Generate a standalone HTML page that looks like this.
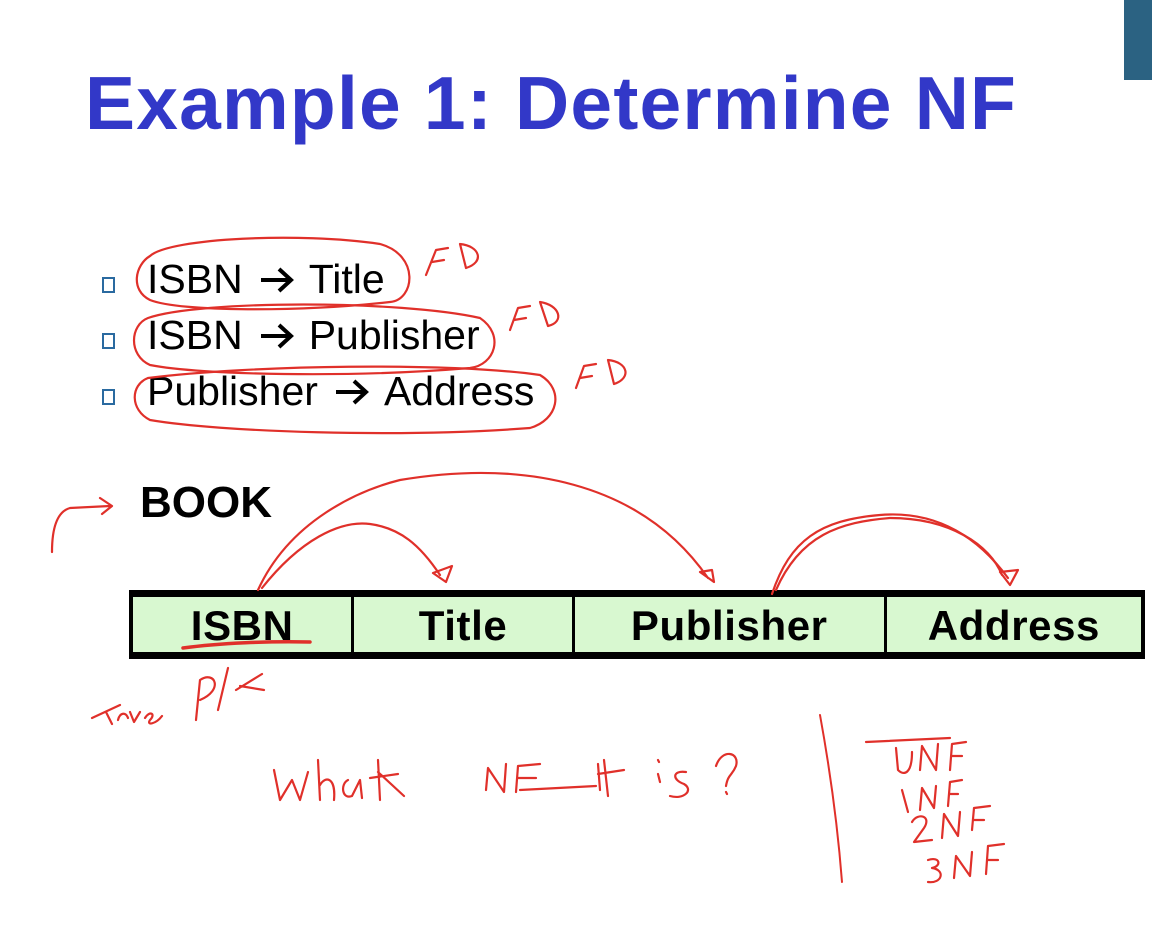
<!DOCTYPE html>
<html><head><meta charset="utf-8"><style>
html,body{margin:0;padding:0;background:#fff;}
body{width:1152px;height:930px;position:relative;overflow:hidden;font-family:"Liberation Sans",Arial,sans-serif;}
.t{position:absolute;white-space:nowrap;}
#title{left:85px;top:60px;font-size:75px;font-weight:bold;color:#3238c8;letter-spacing:1.2px;}
.b{position:absolute;width:9px;height:12px;border:2px solid #2a6aa0;left:102px;}
.li{font-size:41px;color:#000;left:147px;}
.ar{display:inline-block;width:36px;height:26px;margin:0 14px 0 16px;}
#book{left:140px;top:478px;font-size:44px;font-weight:bold;}
#tbl{position:absolute;left:129px;top:590px;width:1008px;height:55px;border:7px solid #000;border-left-width:4px;border-right-width:4px;background:#d8f8d0;display:flex;}
#tbl div{border-right:3px solid #000;font-weight:bold;font-size:42px;text-align:center;line-height:58px;letter-spacing:0.6px;}
</style></head><body>
<div style="position:absolute;left:1124px;top:0;width:28px;height:80px;background:#2b6282"></div>
<div class="t" id="title">Example 1: Determine NF</div>
<div class="b" style="top:277px"></div><div class="t li" style="top:256px">ISBN<svg class="ar" viewBox="0 0 36 26"><path d="M2 13H32M20 2L32 13L20 24" stroke="#000" stroke-width="4" fill="none"/></svg>Title</div>
<div class="b" style="top:333px"></div><div class="t li" style="top:312px">ISBN<svg class="ar" viewBox="0 0 36 26"><path d="M2 13H32M20 2L32 13L20 24" stroke="#000" stroke-width="4" fill="none"/></svg>Publisher</div>
<div class="b" style="top:389px"></div><div class="t li" style="top:368px">Publisher<svg class="ar" viewBox="0 0 36 26"><path d="M2 13H32M20 2L32 13L20 24" stroke="#000" stroke-width="4" fill="none"/></svg>Address</div>
<div class="t" id="book">BOOK</div>
<div id="tbl"><div style="width:219px">ISBN</div><div style="width:218px">Title</div><div style="width:310px">Publisher</div><div style="width:255px;border-right:none">Address</div></div>
<svg width="1152" height="930" style="position:absolute;left:0;top:0" fill="none" stroke="#e0302a" stroke-width="2.2" stroke-linecap="round" stroke-linejoin="round">
<path d="M150 256 C170 238 300 232 380 244 C420 255 415 300 390 302 C300 312 180 312 150 300 C130 290 135 265 150 256"/>
<path d="M148 318 C200 300 400 300 480 318 C505 335 495 365 470 368 C350 378 200 375 150 365 C128 355 130 325 148 318"/>
<path d="M148 378 C250 365 450 362 540 375 C565 390 558 420 530 428 C400 438 220 432 150 420 C130 410 130 385 148 378"/>
<path d="M426 275 L436 250 L448 248 M432 262 L444 260 M460 244 L466 268 M460 244 C480 246 485 262 466 268"/>
<path d="M510 330 L518 308 L530 306 M514 320 L526 318 M540 302 L548 326 M540 302 C560 305 565 322 548 326"/>
<path d="M576 388 L584 366 L596 364 M580 378 L592 376 M608 360 L614 384 M608 360 C628 362 632 378 614 384"/>
<path d="M52 552 C52 530 56 512 70 508 L110 506 M100 498 L112 506 L102 514"/>
<path d="M258 590 C290 520 360 490 400 480 C520 460 640 480 708 578 M700 572 L712 570 L714 582 Z"/>
<path d="M262 588 C300 540 340 520 370 524 C400 528 420 545 440 575 M433 573 L452 566 L446 582 Z"/>
<path d="M772 594 C790 540 820 520 880 515 C940 510 980 540 1008 578 M1000 572 L1018 570 L1010 585 Z"/>
<path d="M776 590 C800 535 840 522 890 518 C950 518 990 545 1002 575"/>
<path d="M183 648 C220 643 270 641 310 642" stroke-width="3.5"/>
<path d="M92 718 L120 705 M106 712 L112 724 M118 720 C120 712 126 712 128 718 M130 712 L134 722 L140 712 M145 718 C150 710 156 714 150 720 C146 726 156 724 162 716 M196 720 L200 680 C215 670 224 690 200 700 M218 710 L228 668 M236 690 L262 674 M240 686 L264 690"/>
<path d="M274 770 L280 800 L292 780 L300 800 L308 772 M318 760 L320 800 M320 785 C326 775 336 778 334 800 M348 780 C340 784 342 800 352 796 L360 780 L362 798 M378 760 L380 800 M370 778 L398 774 M378 772 L404 796"/>
<path d="M486 790 L488 768 L504 792 L506 764 M516 792 L518 766 L540 764 M518 778 L536 778 M520 790 L596 786 M598 764 L600 790 M604 760 L608 796 M598 774 L624 770"/>
<path d="M658 774 L660 782 M658 760 L659 762 M686 772 C672 770 672 780 684 784 C694 790 684 800 670 796 M716 766 C722 748 740 752 736 766 C732 776 728 774 726 786 M726 792 L727 794"/>
<path d="M820 715 C830 770 838 830 842 882" stroke-width="2"/>
<path d="M866 742 L950 738 M896 748 L898 770 C904 776 912 774 912 752 M920 770 L922 746 L936 770 L938 744 M950 770 L952 744 L966 742 M952 756 L962 756"/>
<path d="M902 790 L908 812 M920 810 L922 788 L934 808 L936 786 M948 806 L950 782 L962 780 M950 794 L958 794"/>
<path d="M912 822 C918 812 932 816 924 828 L914 842 L932 840 M942 838 L944 814 L958 836 L960 812 M972 830 L974 808 L990 806 M974 820 L984 820"/>
<path d="M928 860 C940 856 942 866 932 868 C946 870 942 884 928 882 M954 878 L956 856 L970 876 L972 852 M986 874 L988 846 L1004 844 M988 860 L998 860"/>
</svg>
</body></html>
